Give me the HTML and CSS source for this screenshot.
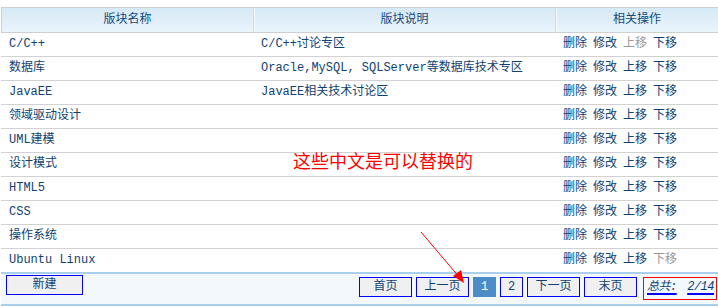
FILE: index.html
```html
<!DOCTYPE html>
<html lang="zh-CN">
<head>
  <meta charset="UTF-8">
  <title>版块管理</title>
  <link rel="stylesheet" href="styles.css">
</head>
<body>

<div id="board">
  <table class="boardList">
    <colgroup>
      <col style="width:252px">
      <col style="width:302px">
      <col style="width:163px">
    </colgroup>
    <thead>
      <tr>
        <th>版块名称</th>
        <th>版块说明</th>
        <th>相关操作</th>
      </tr>
    </thead>
    <tbody>
      <tr><td>C/C++</td><td>C/C++讨论专区</td><td class="ops"><a href="#">删除</a> <a href="#">修改</a> <span class="off">上移</span> <a href="#">下移</a></td></tr>
      <tr><td>数据库</td><td>Oracle,MySQL, SQLServer等数据库技术专区</td><td class="ops"><a href="#">删除</a> <a href="#">修改</a> <a href="#">上移</a> <a href="#">下移</a></td></tr>
      <tr><td>JavaEE</td><td>JavaEE相关技术讨论区</td><td class="ops"><a href="#">删除</a> <a href="#">修改</a> <a href="#">上移</a> <a href="#">下移</a></td></tr>
      <tr><td>领域驱动设计</td><td></td><td class="ops"><a href="#">删除</a> <a href="#">修改</a> <a href="#">上移</a> <a href="#">下移</a></td></tr>
      <tr><td>UML建模</td><td></td><td class="ops"><a href="#">删除</a> <a href="#">修改</a> <a href="#">上移</a> <a href="#">下移</a></td></tr>
      <tr><td>设计模式</td><td></td><td class="ops"><a href="#">删除</a> <a href="#">修改</a> <a href="#">上移</a> <a href="#">下移</a></td></tr>
      <tr><td>HTML5</td><td></td><td class="ops"><a href="#">删除</a> <a href="#">修改</a> <a href="#">上移</a> <a href="#">下移</a></td></tr>
      <tr><td>CSS</td><td></td><td class="ops"><a href="#">删除</a> <a href="#">修改</a> <a href="#">上移</a> <a href="#">下移</a></td></tr>
      <tr><td>操作系统</td><td></td><td class="ops"><a href="#">删除</a> <a href="#">修改</a> <a href="#">上移</a> <a href="#">下移</a></td></tr>
      <tr><td>Ubuntu Linux</td><td></td><td class="ops"><a href="#">删除</a> <a href="#">修改</a> <a href="#">上移</a> <span class="off">下移</span></td></tr>
    </tbody>
  </table>

  <div id="toolBar">
    <button class="btn newBtn">新建</button>
    <div class="pager">
      <a class="btn pageBtn" href="#">首页</a>
      <a class="btn pageBtn" href="#">上一页</a>
      <a class="btn numBtn current" href="#">1</a>
      <a class="btn numBtn" href="#">2</a>
      <a class="btn pageBtn" href="#">下一页</a>
      <a class="btn pageBtn" href="#">末页</a>
      <span class="total"><i>总共:</i><i>2/14</i></span>
    </div>
  </div>

  <p class="note">这些中文是可以替换的</p>

  <svg class="arrow" width="50" height="60" viewBox="0 0 50 60">
    <line x1="2" y1="3" x2="41" y2="49" stroke="#ff0000" stroke-width="1"/>
    <polygon points="45,54 34,47 42,41" fill="#ff0000"/>
  </svg>
</div>

</body>
</html>
```

FILE: styles.css
```css
body {
  margin: 0;
  background: #ffffff;
  font-family: "Liberation Mono", "Noto Sans CJK SC", monospace;
  font-size: 12px;
  color: #0f4273;
}

#board {
  position: relative;
  margin: 7px 0 0 1px;
  width: 717px;
  overflow: hidden;
}

.boardList {
  border-collapse: separate;
  border-spacing: 0;
  table-layout: fixed;
  width: 717px;
}

.boardList th {
  font-weight: normal;
  line-height: 24px;
  text-align: center;
  color: #134a7c;
  background: linear-gradient(#d6e9f6, #eaf4fb);
  border-top: 1px solid #cfcfcf;
  border-bottom: 1px solid #cfcfcf;
  padding: 0;
}

.boardList th:first-child {
  border-left: 1px solid #cfcfcf;
}

.boardList th + th {
  border-left: 1px solid #d8d8d8;
  box-shadow: inset 1px 0 #f4f8fb;
}

.boardList td {
  line-height: 23px;
  padding: 0 8px;
  border-bottom: 1px solid #d2d2d2;
  white-space: nowrap;
  overflow: hidden;
}

.boardList tr:last-child td {
  border-bottom: none;
}

.ops {
  word-spacing: -1.2px;
}

.ops a, .ops span {
  color: #0f4273;
  text-decoration: none;
}

.ops .off {
  color: #999999;
}

#toolBar {
  display: flex;
  justify-content: space-between;
  align-items: flex-start;
  height: 30px;
  background-color: #f3f8fd;
  border-top: 2px solid #a9cfea;
  border-bottom: 2px solid #a9cfea;
}

.btn {
  box-sizing: border-box;
  display: inline-block;
  height: 20px;
  line-height: 18px;
  padding: 0;
  border: 1px solid #0000ff;
  background-color: #f0f0f0;
  color: #0f4273;
  font-family: "Liberation Mono", "Noto Sans CJK SC", monospace;
  font-size: 12px;
  text-align: center;
  text-decoration: none;
}

.newBtn {
  width: 77px;
  margin: 1px 0 0 5px;
}

.pager {
  display: flex;
  align-items: flex-start;
  gap: 4px;
  margin: 3px 1px 0 0;
}

.pageBtn {
  width: 53px;
}

.numBtn {
  width: 23px;
}

.numBtn.current {
  background-color: #4c8dc7;
  border-color: #4c8dc7;
  color: #ffffff;
}

.total {
  box-sizing: border-box;
  display: flex;
  justify-content: space-between;
  height: 23px;
  width: 74px;
  margin-left: 2px;
  padding: 0 2px 0 3px;
  line-height: 19px;
  white-space: nowrap;
  letter-spacing: -0.5px;
  border: 1px solid #ff0000;
}

.total i {
  text-decoration: underline;
  text-decoration-color: #0000ff;
  text-decoration-thickness: 2px;
  text-underline-offset: 3px;
}

.note {
  position: absolute;
  left: 292px;
  top: 144px;
  margin: 0;
  font-family: "Noto Sans CJK SC", sans-serif;
  font-size: 18px;
  line-height: 18px;
  color: #ff0000;
}

.arrow {
  position: absolute;
  left: 418px;
  top: 222px;
}
```
